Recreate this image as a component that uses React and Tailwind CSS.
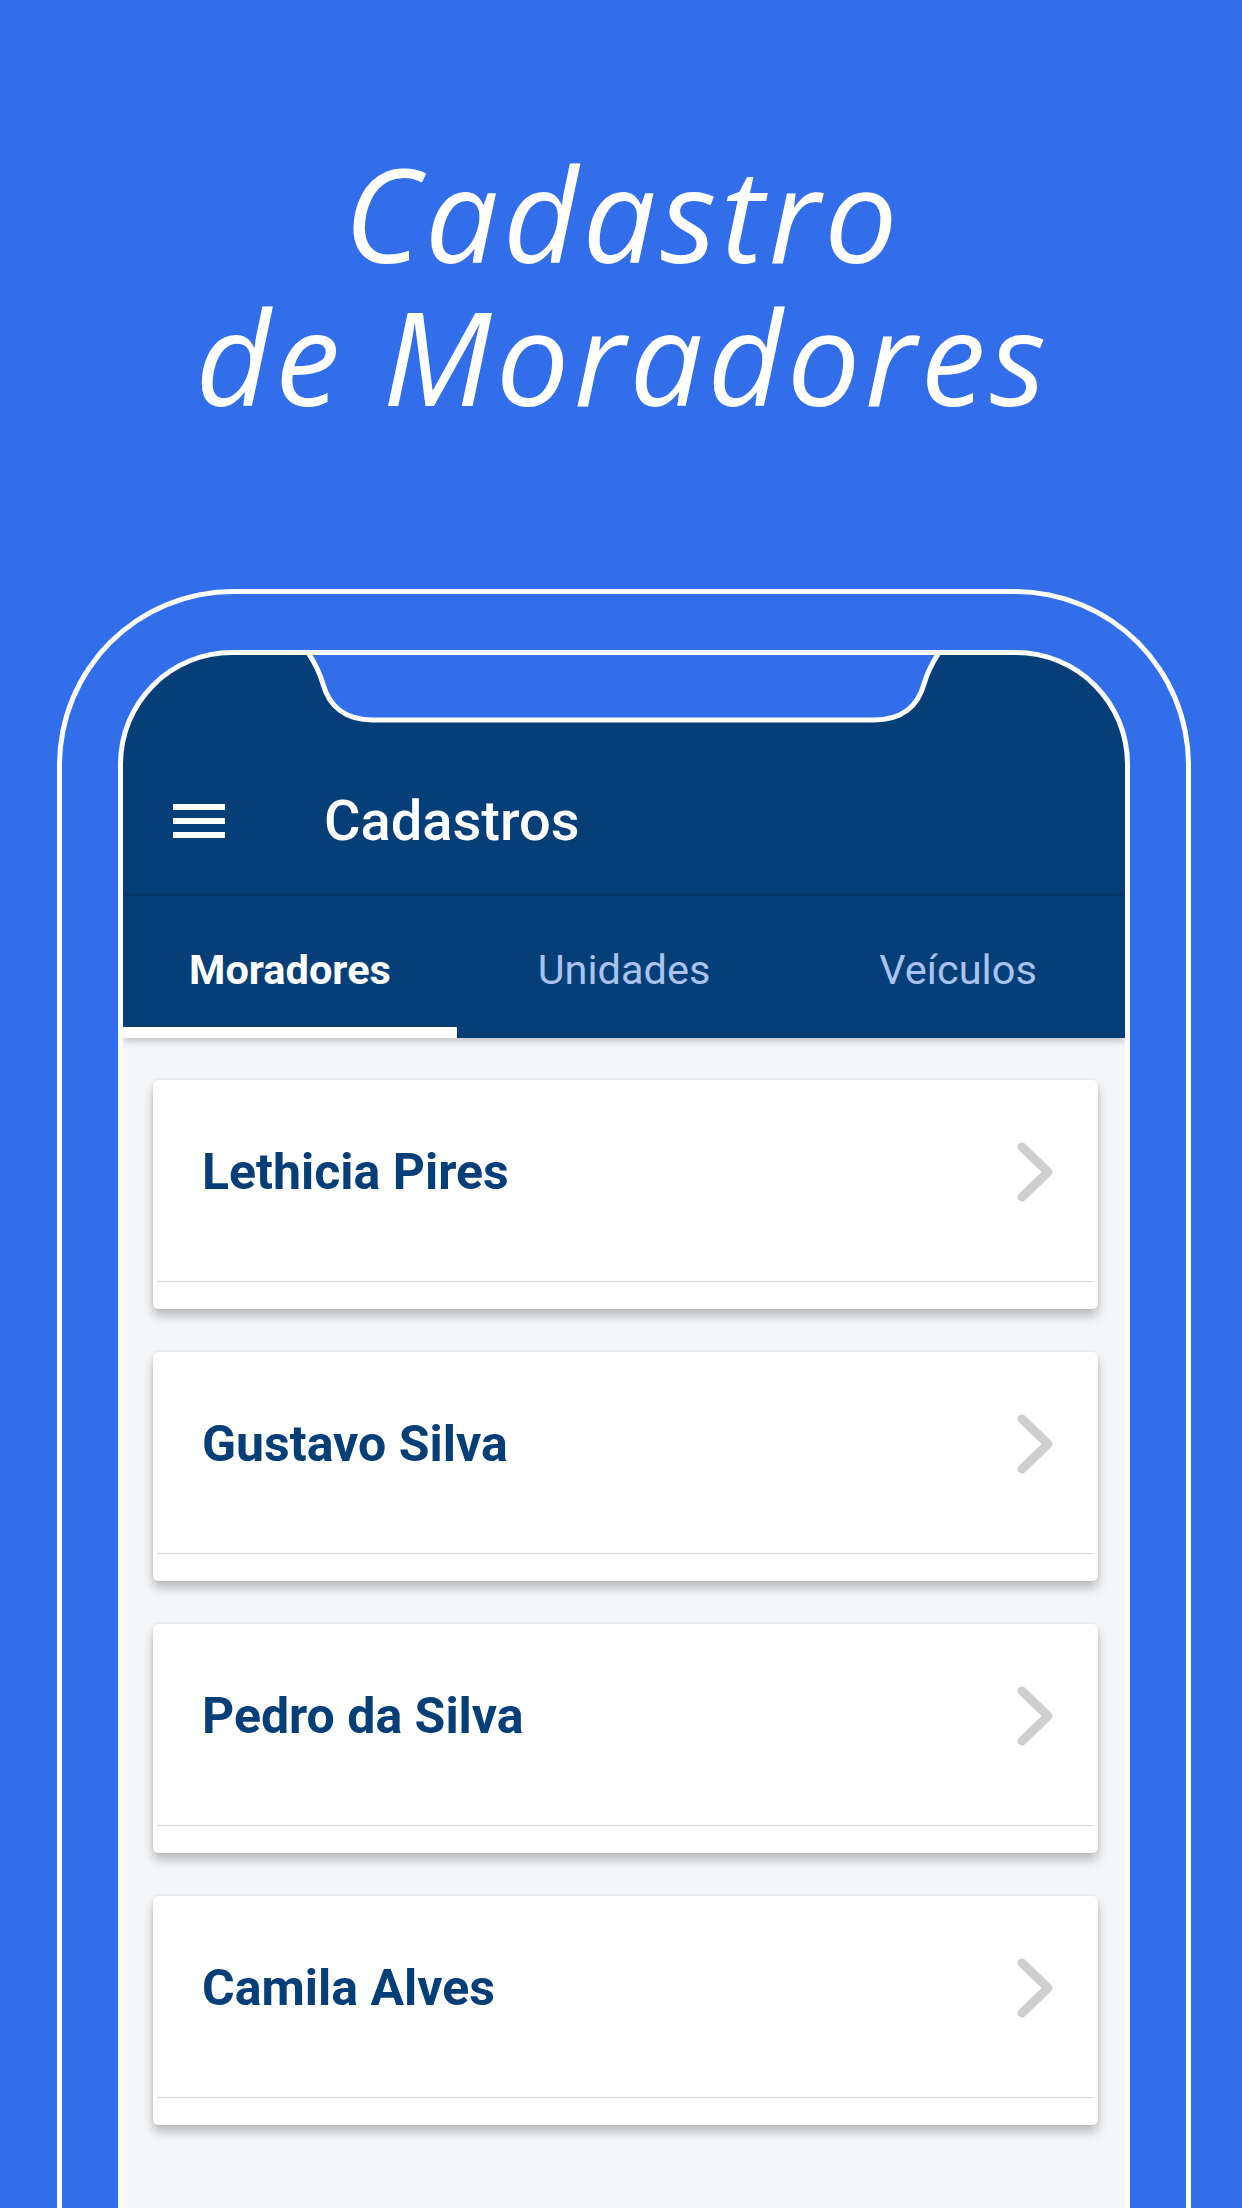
// Marketing screenshot: "Cadastro de Moradores" with a phone mock-up that shows
// the residents list (Moradores tab) of the condo app.

const RESIDENTS = ["Lethicia Pires", "Gustavo Silva", "Pedro da Silva", "Camila Alves"];
const TABS = ["Moradores", "Unidades", "Veículos"];

export default function App() {
  return (
    <div className="h-[2208px] w-[1242px] overflow-hidden bg-[#326dea] font-['Roboto','Liberation_Sans',sans-serif]">
      {/* headline */}
      <h1 className="pt-[141px] pl-[4px] text-center font-['Open_Sans','Liberation_Sans',sans-serif] text-[130px] font-normal italic leading-[143px] tracking-[4.5px] text-white">
        Cadastro
        <br />
        de Moradores
      </h1>

      {/* phone frame */}
      <div className="ml-[57px] mt-[162px] h-[1700px] w-[1134px] rounded-t-[176px] border-[5px] border-b-0 border-white px-[56px] pt-[56px]">
        <Screen />
      </div>
    </div>
  );
}

function Screen() {
  return (
    <div className="relative flex h-[1600px] flex-col overflow-hidden rounded-t-[114px] border-[5px] border-b-0 border-white bg-[#f5f7f9]">
      <Notch />

      {/* toolbar */}
      <div className="h-[239px] bg-[#063f78] pt-[116px]">
        <div className="flex h-[100px] items-center">
          <button type="button" className="ml-[50px] flex w-[52px] flex-col gap-[8.5px]" aria-label="Menu">
            <span className="h-[5.5px] w-full bg-white" />
            <span className="h-[5.5px] w-full bg-white" />
            <span className="h-[5.5px] w-full bg-white" />
          </button>
          <span className="ml-[99px] text-[56px] font-medium leading-none text-white">Cadastros</span>
        </div>
      </div>

      {/* tabs */}
      <div className="relative z-10 flex h-[144px] border-t-2 border-[#04376b] bg-[#063f78] shadow-[0_3px_7px_rgba(0,0,0,0.22)]">
        {TABS.map((tab, i) => (
          <div key={tab} className="flex flex-1 flex-col">
            <div
              className={`flex flex-1 items-center justify-center pt-[16px] text-[41.5px] leading-none ${
                i === 0 ? "font-bold text-white" : "font-normal text-[#aac3ee]"
              }`}
            >
              {tab}
            </div>
            <div className={`h-[11px] ${i === 0 ? "bg-white" : ""}`} />
          </div>
        ))}
      </div>

      {/* residents list */}
      <div className="flex flex-col gap-[43px] pl-[30px] pr-[27px] pt-[42px]">
        {RESIDENTS.map((name) => (
          <ResidentCard key={name} name={name} />
        ))}
      </div>
    </div>
  );
}

function ResidentCard({ name }) {
  return (
    <div className="h-[229px] rounded-[5px] bg-white shadow-[0_7px_11px_rgba(0,0,0,0.25),0_0_3px_rgba(0,0,0,0.1)]">
      <div className="h-[201px] pt-[42px]">
        <div className="flex h-[100px] items-center pl-[49px] pr-[45px]">
          <span className="flex-1 text-[50px] font-bold leading-none text-[#063f78]">{name}</span>
          <svg width="36" height="60" viewBox="0 0 36 60" fill="none">
            <path d="M5 5 L31 30 L5 55" stroke="#cfcfcf" strokeWidth="9" strokeLinecap="round" strokeLinejoin="round" />
          </svg>
        </div>
      </div>
      <div className="mx-[4px] h-px bg-[#d9d9d9]" />
    </div>
  );
}

// Camera notch cut into the top of the screen: page blue with a white outline.
function Notch() {
  return (
    <svg
      className="absolute left-[179px] top-[-10px]"
      width="643"
      height="84"
      viewBox="-5 -5 643 84"
      fill="none"
    >
      <path
        d="M-4 -5 L0 1 C6 10 12 20 16 34 C22 56 38 70 66 70 L567 70 C595 70 611 56 617 34 C621 20 627 10 633 1 L637 -5 Z"
        fill="#326dea"
      />
      <path
        d="M-2 -2 L0 1 C6 10 12 20 16 34 C22 56 38 70 66 70 L567 70 C595 70 611 56 617 34 C621 20 627 10 633 1 L635 -2"
        stroke="white"
        strokeWidth="5"
      />
    </svg>
  );
}
